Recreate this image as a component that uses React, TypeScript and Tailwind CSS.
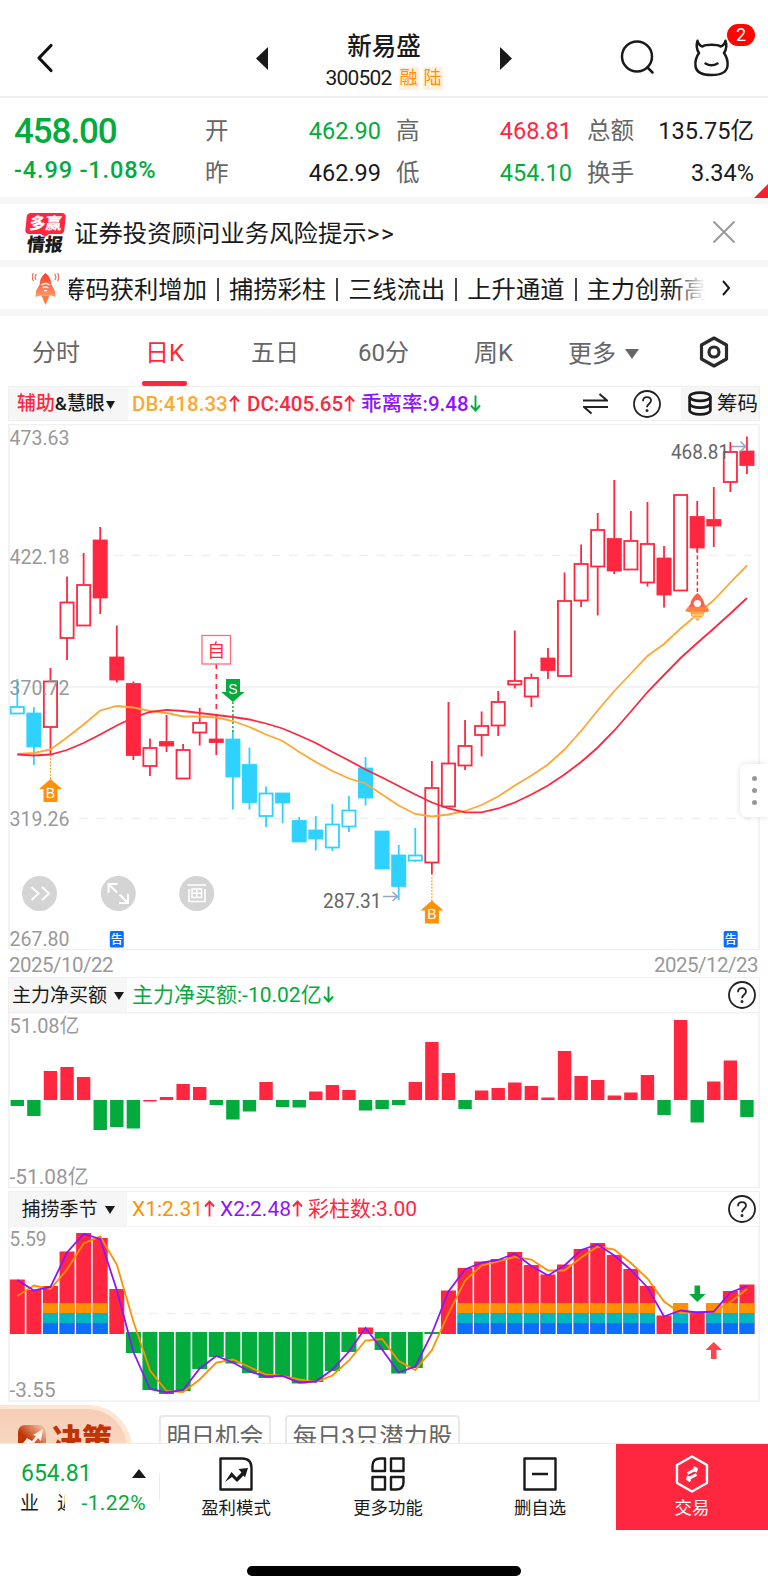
import React from 'react';

const RED = '#ff273f';
const GREEN = '#02ab3c';
const CYAN = '#2fd2ff';
const ORANGE = '#ff9000';
const PURPLE = '#9013fe';

// x of the n-th trading day
const dayX = (i: number) => 17.3 + i * 16.583;

// [high, bodyTop, bodyBottom, low, kind]; R/r = red filled/hollow, C/c = cyan filled/hollow
type Candle = [number, number, number, number, string];
const CANDLES: Candle[] = [
  [679, 706.5, 713.5, 713.5, 'c'],
  [707, 713, 746.5, 765, 'C'],
  [668, 681, 727, 755, 'r'],
  [576.5, 602, 638, 660, 'r'],
  [553, 584.5, 625.5, 625.5, 'r'],
  [527, 540, 597.5, 614, 'R'],
  [625.5, 657, 679.5, 682.5, 'R'],
  [681.5, 683.5, 755, 760, 'R'],
  [738.5, 747.5, 766, 776, 'r'],
  [715, 741.5, 745.5, 752, 'R'],
  [744, 749.5, 778.5, 778.5, 'r'],
  [708, 722.5, 732.5, 745.5, 'r'],
  [715.5, 739, 742, 755, 'R'],
  [731, 739, 776.5, 809.5, 'C'],
  [747.5, 764.5, 802, 809.5, 'C'],
  [786.5, 793, 816, 827, 'c'],
  [793, 793, 802.5, 823, 'C'],
  [817, 820.5, 841.5, 841.5, 'C'],
  [816, 830, 838.5, 850.5, 'C'],
  [804, 824, 847.5, 851, 'c'],
  [796, 810, 826.5, 832, 'c'],
  [757, 768, 797.5, 805.5, 'C'],
  [831, 831, 868.5, 868.5, 'C'],
  [845, 855, 886, 900, 'C'],
  [828, 855, 860.5, 862, 'c'],
  [761, 787.5, 862.5, 874, 'r'],
  [702, 763, 806.5, 806.5, 'r'],
  [720, 745.5, 765.5, 770, 'r'],
  [711.5, 725.5, 735, 756.5, 'r'],
  [691, 701.5, 725.5, 736, 'r'],
  [630.5, 680.5, 684.5, 688.5, 'r'],
  [673.5, 677.5, 696.5, 707, 'r'],
  [648, 658, 670, 679, 'R'],
  [572.5, 600.5, 676, 676, 'r'],
  [544.5, 563.5, 600.5, 607, 'r'],
  [513, 529.5, 566.5, 615.5, 'r'],
  [480, 538.5, 570.5, 574, 'R'],
  [511, 540.5, 569.5, 569.5, 'r'],
  [502, 543.5, 582.5, 586.5, 'r'],
  [546, 558, 594.5, 607.5, 'R'],
  [494.5, 494.5, 590.5, 590.5, 'r'],
  [501, 516.5, 547.5, 552, 'R'],
  [487, 519.5, 525.5, 547, 'R'],
  [442, 451.5, 482, 492, 'r'],
  [436.5, 451, 465, 474, 'R'],
];

const DB_LINE = [
  754, 753, 749.5, 737.5, 724.5, 710.5, 706, 707.5, 711, 713, 716.5, 716.5, 717.5, 721, 727, 734.5, 741, 752, 762,
  771, 778.5, 783.5, 794.5, 805.5, 814, 816.5, 814.5, 811, 805, 796.5, 785.5, 775.5, 764.5, 749.5, 731, 710.5, 691,
  673.5, 656, 644, 628.5, 614.5, 600, 582.5, 565.5,
];
const DC_LINE = [
  754.5, 755.5, 754.5, 750, 743, 734.5, 725.5, 717.5, 712, 709.8, 711, 713, 715, 717, 719.5, 723.5, 728.5, 735.5, 743,
  752, 760.5, 769.5, 777.5, 786, 794.5, 802.5, 808.5, 812.3, 812.3, 808.5, 802.5, 794.5, 785.5, 774.5, 762, 747.5,
  730.5, 711.5, 692, 675, 658, 643, 628.5, 613.5, 598,
];

// net inflow, as signed bar heights
const NET = [
  -6, -16, 29, 33, 23, -30, -27, -28.5, -1.5, 3, 16, 13, -5, -19.5, -11.5, 18, -7, -7.5, 8.5, 15, 10, -10.5, -9, -5, 18,
  58, 27, -9, 9.5, 12, 17.5, 14, 2.5, 49, 24, 20, 4.5, 7.5, 25, -15, 80, -22.5, 18.5, 39.5, -17,
];

// bar ends of the season indicator: above 1334 is red, below is green
const SEASON = [
  1279.5, 1290, 1286, 1251.5, 1233, 1238, 1289, 1353, 1390, 1394, 1391, 1369, 1357, 1363.5, 1373, 1378, 1377, 1383.5,
  1382, 1371, 1352, 1327.5, 1350, 1373.5, 1368, 1334, 1290.5, 1268, 1261.5, 1259, 1252, 1265, 1274.5, 1264.5, 1249,
  1243, 1255, 1269, 1286, 1315.5, 1303.5, 1313, 1303.5, 1291, 1284.5,
];
const X1_LINE = [
  1296, 1285.5, 1289, 1269.5, 1243.5, 1236.5, 1264.5, 1321.5, 1370.5, 1391, 1392, 1379.5, 1362.5, 1359.5, 1367, 1374.5,
  1376, 1379.5, 1382, 1375.5, 1360.5, 1340.5, 1339, 1361, 1370, 1350, 1313.5, 1280.5, 1265.5, 1261.5, 1257, 1259.5,
  1270.5, 1270.5, 1257.5, 1246.5, 1249.5, 1263, 1278.5, 1301.5, 1313, 1312, 1312, 1302, 1289,
];
const X2_LINE = [
  1280, 1290.5, 1287, 1252.5, 1234, 1239, 1290, 1352, 1389, 1392.5, 1390, 1368.5, 1356, 1362.5, 1371.5, 1376.5, 1376,
  1382.5, 1381.5, 1369.5, 1351.5, 1328, 1349.5, 1372.5, 1366.5, 1333.5, 1291.5, 1269.5, 1262.5, 1260, 1253.5, 1266,
  1275.5, 1265.5, 1250, 1244.5, 1255.5, 1270, 1287.5, 1316.5, 1310.5, 1312.5, 1311.5, 1292.5, 1286,
];
const hasStack = (i: number) => (i >= 2 && i <= 5) || (i >= 27 && i <= 38) || i === 40 || i >= 42;

const toPoints = (ys: number[]) => ys.map((y, i) => `${dayX(i).toFixed(1)},${y}`).join(' ');

const Axis: React.FC<{ x?: number; y: number; w: number; children: string; fill?: string }> = ({
  x = 9.5,
  y,
  w,
  children,
  fill = '#999',
}) => (
  <text x={x} y={y} textLength={w} lengthAdjust="spacingAndGlyphs" fontSize="20.5" fill={fill}>
    {children}
  </text>
);

const Arrow: React.FC<{ down?: boolean }> = ({ down }) => (
  <svg
    className={`ml-px inline-block h-[17px] w-[11px] align-[-1px] ${down ? 'rotate-180' : ''}`}
    viewBox="0 0 11 17"
    fill="none"
    stroke={down ? GREEN : RED}
    strokeWidth="1.9"
  >
    <path d="M5.500 16.500V1.500M1 6.500l4.500-5 4.500 5" />
  </svg>
);

const HelpIcon: React.FC = () => (
  <svg width="30" height="30" viewBox="0 0 30 30" fill="none" stroke="#222" strokeWidth="1.8">
    <circle cx="15" cy="15" r="13" />
    <path d="M11 12.200c0-2.600 1.700-4 4-4s4 1.400 4 3.600c0 3-4 3-4 6.400" />
    <circle cx="15" cy="21.6" r="0.6" fill="#222" />
  </svg>
);

const Header: React.FC = () => (
  <div className="flex h-[98px] items-center border-b-2 border-[#f0f0f0] pt-[20px]">
    <div className="w-[256px] pl-[36px]">
      <svg width="18" height="30" viewBox="0 0 18 30" fill="none" stroke="#111" strokeWidth="3.2" strokeLinecap="round" strokeLinejoin="round">
        <path d="M15 2.500 3 15l12 12.500" />
      </svg>
    </div>
    <svg width="12" height="23" viewBox="0 0 12 23">
      <path d="M12 0v23L0 11.500z" fill="#1a1a1a" />
    </svg>
    <div className="flex w-[232px] flex-col items-center pt-[8px]">
      <div className="flex h-[32px] items-center text-[24.500px] font-medium leading-none">新易盛</div>
      <div className="flex h-[30px] items-center text-[21px] leading-none">
        <span className="mr-[7px] tracking-[-0.800px]">300502</span>
        <span className="mr-1 flex h-[23px] w-5 items-center justify-center bg-[#fff0e0] text-[18px] text-[#ff9000]">融</span>
        <span className="flex h-[23px] w-5 items-center justify-center bg-[#fff0e0] text-[18px] text-[#ff9000]">陆</span>
      </div>
    </div>
    <svg width="12" height="23" viewBox="0 0 12 23">
      <path d="M0 0v23l12-11.500z" fill="#1a1a1a" />
    </svg>
    <div className="ml-[108px] flex">
      <svg width="36" height="36" viewBox="0 0 36 36" fill="none" stroke="#1a1a1a" strokeWidth="2.500" strokeLinecap="round">
        <circle cx="17" cy="17.500" r="15" />
        <path d="m27.500 28.500 5 5" />
      </svg>
      <div className="relative ml-[37px]">
        <svg width="38" height="38" viewBox="0 0 38 38" fill="none" stroke="#1a1a1a" strokeWidth="2.500" strokeLinejoin="round" strokeLinecap="round">
          <path d="M4.500 1.800C5.500 5 7 7 9.500 7.500 13 5.300 24 5.300 27.500 7.500 30 7 31.500 5 32.500 1.800 34 6 33.500 10 31 14c3 4 4 8 3.500 13-.7 6-5.500 9-16 9S3.200 33 2.500 27C2 22 3 18 6 14 3.500 10 3 6 4.500 1.800z" />
          <path d="M12.500 24.500c3.500 2 8.500 2 12 0" />
        </svg>
        <span className="absolute -top-[15px] left-[34px] flex h-[22px] w-[28px] items-center justify-center rounded-full bg-[#ff0500] text-[18px] leading-none text-white">
          2
        </span>
      </div>
    </div>
  </div>
);

const QUOTES = [
  { label: '开', value: '462.90', color: 'text-[#02ab3c]' },
  { label: '高', value: '468.81', color: 'text-[#ff273f]' },
  { label: '总额', value: '135.75亿', color: 'text-[#1a1a1a]' },
  { label: '昨', value: '462.99', color: 'text-[#1a1a1a]' },
  { label: '低', value: '454.10', color: 'text-[#02ab3c]' },
  { label: '换手', value: '3.34%', color: 'text-[#1a1a1a]' },
];

const Quote: React.FC = () => (
  <div className="relative flex h-[99px] pl-[14px] pt-[13px]">
    <div className="w-[191px] text-[#02ab3c]">
      <div className="flex h-[41px] items-center text-[35px] font-medium leading-none tracking-[-1.100px]">458.00</div>
      <div className="flex h-[37px] items-center whitespace-pre text-[23.500px] font-medium leading-none tracking-[0.850px]">-4.99 -1.08%</div>
    </div>
    <div className="grid h-[82px] grid-cols-[176px_176px_167px] gap-x-[15px]">
      {QUOTES.map((q) => (
        <div key={q.label} className="flex h-[42px] items-center justify-between text-[23.500px] leading-none">
          <span className="text-[#666]">{q.label}</span>
          <span className={q.color}>{q.value}</span>
        </div>
      ))}
    </div>
    <svg className="absolute -bottom-px right-0" width="14" height="14" viewBox="0 0 14 14">
      <path d="M14 0v14H0z" fill="#f5222d" />
    </svg>
  </div>
);

const Notice: React.FC = () => (
  <div className="flex h-[56px] items-center pl-[24px] pr-[32px]">
    <div className="flex w-[42px] flex-col items-center text-[17px] font-black leading-none">
      <div className="flex h-[21px] w-[39px] -skew-x-6 items-center justify-center rounded-[4px] bg-[#ff273f] text-[16px] text-white">多赢</div>
      <svg width="8" height="3" viewBox="0 0 8 3">
        <path d="M0 0h8L4 3z" fill={RED} />
      </svg>
      <div className="-skew-x-6 text-[18px] leading-[15px]">情报</div>
    </div>
    <div className="ml-[8px] flex-1 pt-[4px] text-[24.400px] leading-none">
      证券投资顾问业务风险提示<span className="tracking-[1.500px]">&gt;&gt;</span>
    </div>
    <svg width="24" height="24" viewBox="0 0 24 24" stroke="#999" strokeWidth="2">
      <path d="m1.500 1.500 21 21m0-21-21 21" />
    </svg>
  </div>
);

const SIGNALS = ['筹码获利增加', '捕捞彩柱', '三线流出', '上升通道', '主力创新高'];

const Signals: React.FC = () => (
  <div className="flex h-[42px] items-center pl-[32px]">
    <svg width="27" height="33" viewBox="0 0 27 33" fill="none">
      <defs>
        <linearGradient id="rk" x1="0" y1="0" x2="0" y2="1">
          <stop offset="0" stopColor="#f5402c" />
          <stop offset="1" stopColor="#ff9a6b" />
        </linearGradient>
      </defs>
      <path d="M13.500 1c4 3 6 7 5.800 11.500l3.700 6.500.5 6-4.500-1.500H8L3.500 25l.5-6 3.700-6.500C7.500 8 9.500 4 13.500 1z" fill="url(#rk)" />
      <path d="M9.500 23.500h8L13.500 33z" fill="#ff7a3d" />
      <path d="M9.500 13q4-3 8 0M10.500 16q3-2.200 6 0M12 19q1.500-1 3 0" stroke="#fff" strokeWidth="1.400" />
      <path d="M4.500 2Q2 4.500 4 8M1.500 1Q-1 5 1.500 9M22.500 2q2.500 2.500.5 6M25.500 1q2.500 4 0 8" stroke="#f0705c" strokeWidth="1.200" />
    </svg>
    <div className="relative ml-[10px] flex w-[636px] justify-end overflow-hidden pt-[3px]">
      <div className="-mr-[3px] flex items-center gap-[10px] whitespace-nowrap text-[24.300px] leading-[36px]">
        {SIGNALS.map((s, i) => (
          <React.Fragment key={s}>
            {i > 0 && <i className="h-[23px] w-[2px] bg-[#444]" />}
            <span>{s}</span>
          </React.Fragment>
        ))}
      </div>
      <div className="absolute inset-y-0 right-0 w-[32px] bg-gradient-to-r from-transparent to-white" />
    </div>
    <svg className="ml-[17px]" width="9" height="16" viewBox="0 0 9 16" fill="none" stroke="#1a1a1a" strokeWidth="2">
      <path d="m1 1 6 7-6 7" />
    </svg>
  </div>
);

const TABS = [
  { label: '分时', pad: 'ml-[32px] w-[113px]' },
  { label: '日K', pad: 'w-[106px]', active: true },
  { label: '五日', pad: 'w-[107px]' },
  { label: '60分', pad: 'w-[116px]' },
  { label: '周K', pad: 'w-[94px]' },
];

const Tabs: React.FC = () => (
  <div className="flex h-[70px] text-[24px] leading-none text-[#666]">
    {TABS.map((t) => (
      <div key={t.label} className={t.pad}>
        <div className={`flex w-fit flex-col items-center ${t.active ? 'text-[#ff273f]' : ''}`}>
          <div className="flex h-[65px] items-center pt-[9px]">{t.label}</div>
          {t.active && <div className="-mx-2 h-[5px] w-[45px] rounded-[2px] bg-[#ff273f]" />}
        </div>
      </div>
    ))}
    <div className="flex h-[64px] w-[131px] items-center pt-[11px]">
      更多
      <svg className="ml-[9px]" width="14" height="10" viewBox="0 0 14 10">
        <path d="M0 0h14L7 10z" fill="#666" />
      </svg>
    </div>
    <svg className="mt-[20px]" width="30" height="32" viewBox="0 0 30 32" fill="none" stroke="#2b2b2b" strokeWidth="3.200">
      <path d="M15 2 27.500 9v14L15 30 2.500 23V9z" strokeLinejoin="round" />
      <circle cx="15" cy="16" r="5" />
    </svg>
  </div>
);

const IndicatorBar: React.FC = () => (
  <div className="mx-2 mb-[3px] flex h-[35px] items-center border border-[#f0f0f0] text-[20.500px] leading-none">
    <div className="flex h-full w-[119px] items-center bg-[#f6f6f6] pl-[8px] pt-[2px] text-[18.900px] font-medium">
      <span className="text-[#ff273f]">辅助</span>&amp;慧眼
      <svg className="ml-px" width="9" height="8" viewBox="0 0 9 8">
        <path d="M0 0h9L4.500 8z" fill="#1a1a1a" />
      </svg>
    </div>
    <div className="flex flex-1 items-center pt-[2px] font-medium">
      <div className="w-[119px] whitespace-nowrap pl-1 text-[#ffa733]">
        DB:418.33
        <Arrow />
      </div>
      <div className="w-[110px] whitespace-nowrap text-[#ff273f]">
        DC:405.65
        <Arrow />
      </div>
      <div className="whitespace-nowrap pl-[4px] text-[#9013fe]">
        乖离率:9.48
        <Arrow down />
      </div>
    </div>
    <svg width="25" height="22" viewBox="0 0 25 22" fill="none" stroke="#222" strokeWidth="2">
      <path d="M0 7.500h24L16.500 1M25 14H1l7.500 6.500" />
    </svg>
    <div className="ml-[24px]">
      <HelpIcon />
    </div>
    <div className="ml-[19px] flex h-full w-[78px] items-center justify-end whitespace-nowrap bg-[#f6f6f6] pr-px">
      <svg width="26" height="25" viewBox="0 0 26 26" fill="none" stroke="#1a1a1a" strokeWidth="2.800">
        <ellipse cx="13" cy="6" rx="10.800" ry="4.300" />
        <path d="M2.200 6v14c0 2.400 4.800 4.300 10.800 4.300s10.800-1.900 10.800-4.300V6M2.200 13c0 2.400 4.800 4.300 10.800 4.300s10.800-1.900 10.800-4.300" />
      </svg>
      <span className="ml-[4px] pt-[2px]">筹码</span>
    </div>
  </div>
);

const BuyMark: React.FC<{ x: number; y: number }> = ({ x, y }) => (
  <g transform={`translate(${x} ${y})`}>
    <path d="M0 0 11.500 10H7v13H-7V10h-4.500z" fill="#ff9108" />
    <text y="18.500" textAnchor="middle" fontSize="14" fill="#fff" fontFamily="Liberation Sans">
      B
    </text>
  </g>
);

const KLineChart: React.FC = () => (
  <div className="relative">
    <svg className="block" width="768" height="526" viewBox="0 424 768 526">
      <rect x="9" y="424.500" width="750" height="525" fill="none" stroke="#f0f0f0" strokeWidth="1.500" />
      <path d="M10 687H759" stroke="#f2f2f2" strokeWidth="2" />
      <path d="M79 555.500H751M79 818.500H751" stroke="#efefef" strokeWidth="1.500" strokeDasharray="9 8.500" />

      {CANDLES.map(([high, top, bottom, low, kind], i) => {
        const x = dayX(i);
        const color = kind.toLowerCase() === 'r' ? RED : CYAN;
        const solid = kind === 'R' || kind === 'C';
        return (
          <g key={i} stroke={color} strokeWidth="1.800">
            {high < top && <path d={`M${x} ${high}V${top}`} />}
            {low > bottom && <path d={`M${x} ${bottom}V${low}`} />}
            <rect
              x={x - 6.600}
              y={top + 0.500}
              width="13.200"
              height={bottom - top - 0.500}
              fill={solid ? color : '#fff'}
            />
          </g>
        );
      })}

      <polyline points={toPoints(DB_LINE)} fill="none" stroke="#ffa733" strokeWidth="1.800" />
      <polyline points={toPoints(DC_LINE)} fill="none" stroke={RED} strokeWidth="1.800" />

      <Axis y={445} w={60}>473.63</Axis>
      <Axis y={564} w={60}>422.18</Axis>
      <Axis y={695} w={60}>370.72</Axis>
      <Axis y={826} w={60}>319.26</Axis>
      <Axis y={945.500} w={60}>267.80</Axis>

      {/* high / low callouts */}
      <Axis x={671} y={458.500} w={58} fill="#666">468.81</Axis>
      <path d="M731 446.500h14M740.500 441.500l5 5-5 5" fill="none" stroke="#9aa5bd" strokeWidth="1.600" />
      <Axis x={323} y={908} w={58.500} fill="#666">287.31</Axis>
      <path d="M383 896.500h14M392.500 892l5 4.500-5 4.500" fill="none" stroke="#9aa5bd" strokeWidth="1.600" />

      {/* buy / sell marks */}
      <path d="M50.500 755V779M431.900 874V901" stroke="#ff9108" strokeWidth="1.200" strokeDasharray="1.600 1.600" />
      <BuyMark x={50.500} y={779} />
      <BuyMark x={431.900} y={900.500} />
      <path d="M232.900 702V732" stroke={GREEN} strokeWidth="1.400" strokeDasharray="2 2" />
      <path d="M226 679h14v13h4.500l-11.600 10-11.600-10h4.700z" fill={GREEN} />
      <text x="233" y="693.500" textAnchor="middle" fontSize="14" fill="#fff" fontFamily="Liberation Sans">
        S
      </text>
      <path d="M216.300 664V716" stroke={RED} strokeWidth="1.600" strokeDasharray="5 5" />
      <rect x="202" y="635.500" width="28.500" height="28.500" fill="#fff" stroke="#ff6b7b" strokeWidth="1.300" />
      <text x="216.300" y="656.500" textAnchor="middle" fontSize="18" fill={RED}>
        自
      </text>

      {/* rocket */}
      <path d="M697.400 549V594" stroke={RED} strokeWidth="1.500" strokeDasharray="4 2.500" />
      <g transform="translate(697.400 593)">
        <path d="M0 0c5 4 6.500 8 7 11l5 7-5 1H-7l-5-1 5-7c.5-3 2-7 7-11z" fill="#ff6248" />
        <path d="M-9.500 14-12 18l5 1.500H7l5-1.500-2.500-4z" fill="#ff8240" />
        <path d="M-6.500 18.500h13v4L0 28l-6.500-5.500z" fill="#ffa83f" />
        <path d="M-5.500 22H6M-4.500 25H5" stroke="#fff" strokeWidth="0.700" />
        <circle cy="10.500" r="3.600" fill="#fff" />
      </g>

      {/* announcement badges */}
      {[116.800, 730.700].map((x) => (
        <g key={x}>
          <rect x={x - 7} y="931" width="14" height="16.500" rx="1.500" fill="#0a6fff" />
          <text x={x} y="943.500" textAnchor="middle" fontSize="12" fontWeight="500" fill="#fff">
            告
          </text>
        </g>
      ))}

      {/* chart tools */}
      <g fill="none" stroke="#fff" strokeWidth="2">
        <circle cx="39.500" cy="893.500" r="17.500" fill="#d4d4d4" stroke="none" />
        <path d="m31.500 887 7 6.500-7 6.500M42 887l7 6.500-7 6.500" />
        <circle cx="118.300" cy="893.500" r="17.500" fill="#d4d4d4" stroke="none" />
        <path d="M108.500 893v-9h9M109 884.500l8 8M128 894v9h-9M127.500 902.500l-8-8" />
        <circle cx="196.700" cy="893.500" r="17.500" fill="#d4d4d4" stroke="none" />
        <path d="M187.500 885h18.500M189 889v12.500h16V889M192 889h9.500v8.500H192zM196.700 889v8.500M192 893.200h9.500" strokeWidth="1.600" />
      </g>
    </svg>
    <div className="absolute right-0 top-[340px] flex h-[53px] w-[28px] flex-col items-center justify-center gap-[7px] rounded-l-[7px] bg-white shadow-[0_0_6px_rgba(0,0,0,0.12)]">
      <i className="h-[5px] w-[5px] rounded-full bg-[#999]" />
      <i className="h-[5px] w-[5px] rounded-full bg-[#999]" />
      <i className="h-[5px] w-[5px] rounded-full bg-[#999]" />
    </div>
  </div>
);

const PanelHeader: React.FC<{ name: string; children: React.ReactNode }> = ({ name, children }) => (
  <div className="mx-2 flex h-[35px] items-center border border-b-0 border-[#f0f0f0] pr-[2px] text-[21px] leading-none">
    <div className="flex h-full w-[118px] shrink-0 items-center justify-center gap-[7px] bg-[#f6f6f6] pt-px text-[19px]">
      {name}
      <svg width="10" height="8" viewBox="0 0 10 8">
        <path d="M0 0h10L5 8z" fill="#1a1a1a" />
      </svg>
    </div>
    <div className="flex flex-1 whitespace-nowrap pl-[5px]">{children}</div>
    <HelpIcon />
  </div>
);

const NetChart: React.FC = () => (
  <svg className="mb-[3px] block" width="768" height="176" viewBox="0 1012 768 176">
    <rect x="9" y="1012.500" width="750" height="175" fill="none" stroke="#f0f0f0" strokeWidth="1.500" />
    {NET.map((h, i) => (
      <rect
        key={i}
        x={dayX(i) - 6.700}
        y={h > 0 ? 1100 - h : 1100}
        width="13.400"
        height={Math.abs(h)}
        fill={h > 0 || i === 8 ? RED : GREEN}
      />
    ))}
    <Axis y={1033} w={70}>51.08亿</Axis>
    <Axis y={1183.500} w={79}>-51.08亿</Axis>
  </svg>
);

const SeasonChart: React.FC = () => (
  <svg className="block" width="768" height="177" viewBox="0 1226 768 177">
    <rect x="9" y="1226" width="750" height="175" fill="none" stroke="#f0f0f0" strokeWidth="1.500" />
    <path d="M79 1313.500H751" stroke="#efefef" strokeWidth="1.500" strokeDasharray="9 8.500" />
    {SEASON.map((y, i) => {
      const x = dayX(i) - 7.500;
      const up = y < 1332;
      return (
        <g key={i}>
          <rect x={x} y={up ? y : 1332} width="15" height={up ? 1334 - y : y - 1332} fill={up ? RED : GREEN} />
          {hasStack(i) && (
            <>
              <rect x={x} y="1303" width="15" height="10" fill={ORANGE} />
              <rect x={x} y="1313" width="15" height="10" fill="#00b6c1" />
              <rect x={x} y="1323" width="15" height="11" fill="#0a6fff" />
            </>
          )}
        </g>
      );
    })}
    <polyline points={toPoints(X1_LINE)} fill="none" stroke={ORANGE} strokeWidth="1.800" />
    <polyline points={toPoints(X2_LINE)} fill="none" stroke={PURPLE} strokeWidth="1.800" />
    <path d="M694.500 1285.500h5.500v8.500h5.500l-8.200 8-8.200-8h5.400z" fill={GREEN} />
    <path d="M713.800 1342l8.200 8h-5.500v9H711v-9h-5.500z" fill="#ff434f" />
    <Axis y={1246} w={37}>5.59</Axis>
    <Axis y={1396.500} w={46}>-3.55</Axis>
  </svg>
);

// Top of a strip that scrolls below the footer
const Strip: React.FC = () => (
  <div className="flex h-[40px] items-start overflow-hidden text-[24.300px] leading-none text-[#666]">
    <div className="mt-[2px] flex h-[60px] w-[132px] shrink-0 items-start rounded-tr-[44px] border-r-[5px] border-t-[4px] border-[#fde6d3] bg-gradient-to-b from-[#f6cdb6] to-[#fbdcc6] pl-[18px] pt-[16px]">
      <svg width="28" height="28" viewBox="0 0 28 28">
        <defs>
          <linearGradient id="jc" x1="0" y1="1" x2="1" y2="0">
            <stop offset="0.4" stopColor="#bf3404" />
            <stop offset="1" stopColor="#fbd5bd" />
          </linearGradient>
        </defs>
        <rect width="28" height="28" rx="7" fill="url(#jc)" />
        <path d="m2 22 7-9 5 3 4-5-3-1 10-6-2 12-3-3-6 8-5-3-5 6z" fill="#fff0e6" />
      </svg>
      <span className="ml-[6px] text-[30px] font-black text-[#c23304]">决策</span>
    </div>
    <div className="ml-[27px] mt-[12px] flex h-[50px] w-[112px] shrink-0 justify-center rounded-[4px] border-2 border-[#e8e8e8] pt-[8px]">明日机会</div>
    <div className="ml-[14px] mt-[12px] flex h-[50px] w-[175px] shrink-0 justify-center rounded-[4px] border-2 border-[#e8e8e8] pt-[8px]">每日3只潜力股</div>
  </div>
);

const NavItem: React.FC<{ label: string; className?: string; children: React.ReactNode }> = ({ label, className = '', children }) => (
  <div className={`flex h-full w-[152px] flex-col items-center pt-[11px] text-[17.400px] leading-none ${className}`}>
    <svg width="38" height="38" viewBox="0 0 38 38" fill="none" stroke="currentColor" strokeWidth="2.400" strokeLinejoin="round">
      {children}
    </svg>
    <span className="mt-[7px]">{label}</span>
  </div>
);

const Footer: React.FC = () => (
  <div className="flex h-[87px] items-center border-t border-[#ececec]">
    <div className="flex h-full w-[159px] flex-col pl-[21px] pr-[13px] pt-[14px] text-[#02ab3c]">
      <div className="flex h-[31px] items-center justify-between text-[23px] leading-none">
        654.81
        <svg width="14" height="9" viewBox="0 0 14 9">
          <path d="M7 0 14 9H0z" fill="#1a1a1a" />
        </svg>
      </div>
      <div className="flex h-[29px] items-center justify-between text-[21px] leading-none tracking-[0.400px]">
        <span className="flex text-[19px] leading-[24px] tracking-normal text-[#1a1a1a]">
          <span className="-ml-px w-[19px]">业</span>
          <span className="ml-[18px] w-[8px] overflow-hidden">近</span>
        </span>
        <span>-1.22%</span>
      </div>
    </div>
    <div className="h-[28px] w-px bg-[#ececec]" />
    <NavItem label="盈利模式">
      <path d="M3.500 3.500H25c6 0 9.500 3.500 9.500 9.500v21.500h-31z" />
      <path d="m8 27 6.500-10 5 5.500 5-5-3-3.500 9.500-1-3 9.500-1.500-2-6.500 6.500-5-5z" fill="currentColor" stroke="none" />
    </NavItem>
    <NavItem label="更多功能">
      <path d="M16 3.500v12.500H3.500V11C3.500 6 6 3.500 11 3.500zM22 3.500h12.500v12.500H22zM3.500 22H16v12.500H3.500zM22 22h12.500v5c0 5-2.500 7.500-7.500 7.500h-5z" />
    </NavItem>
    <NavItem label="删自选">
      <path d="M3.500 3.500h31v31h-31zM11 19h16" />
    </NavItem>
    <NavItem label="交易" className="bg-[#ff273f] text-white">
      <path d="M19 1.500 34 10v18L19 36.500 4 28V10z" />
      <path d="M14.500 18.500 23 14M15 24l8.500-4.500M20.500 12.500l3 1.500-1 3M17.500 26l-3-2 1-3" strokeWidth="2.800" />
    </NavItem>
  </div>
);

const App: React.FC = () => (
  <div className="h-[1590px] w-[768px] overflow-hidden bg-white font-[Roboto,'Noto_Sans_CJK_SC',sans-serif] text-[#1a1a1a]">
    <Header />
    <Quote />
    <div className="h-[7px] bg-[#f6f6f6]" />
    <Notice />
    <div className="h-[7px] bg-[#f6f6f6]" />
    <Signals />
    <div className="h-[7px] bg-[#f6f6f6]" />
    <Tabs />
    <IndicatorBar />
    <KLineChart />
    <div className="flex h-[27px] items-center justify-between pl-[9px] pr-[10px] pt-[3px] text-[20.500px] leading-none tracking-[-0.500px] text-[#999]">
      <span>2025/10/22</span>
      <span>2025/12/23</span>
    </div>
    <PanelHeader name="主力净买额">
      <span className="text-[#02ab3c]">
        主力净买额:-10.02亿
        <Arrow down />
      </span>
    </PanelHeader>
    <NetChart />
    <PanelHeader name="捕捞季节">
      <span className="w-[88px] text-[#ff9000]">
        X1:2.31
        <Arrow />
      </span>
      <span className="w-[88px] text-[#9013fe]">
        X2:2.48
        <Arrow />
      </span>
      <span className="text-[#ff273f]">彩柱数:3.00</span>
    </PanelHeader>
    <SeasonChart />
    <Strip />
    <Footer />
    <div className="flex h-[60px] justify-center pt-[36px]">
      <div className="h-[10px] w-[274px] rounded-full bg-black" />
    </div>
  </div>
);

export default App;
